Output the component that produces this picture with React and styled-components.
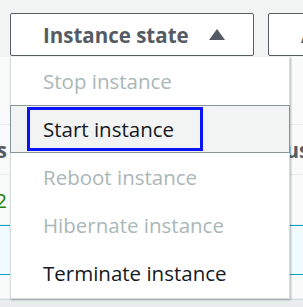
import React from 'react';
import styled, { createGlobalStyle } from 'styled-components';

const GlobalStyle = createGlobalStyle`
  html, body {
    margin: 0;
    padding: 0;
    background: #ffffff;
  }
  body {
    font-family: "Open Sans", "Noto Sans", Arial, sans-serif;
    overflow: hidden;
  }
`;

const Page = styled.div`
  position: relative;
  width: 303px;
  height: 307px;
  overflow: hidden;
  background: #ffffff;
`;

const Toolbar = styled.div`
  display: flex;
  gap: 14px;
  height: 57px;
  padding: 13px 0 0 10px;
  box-sizing: border-box;
  background: #f2f3f3;
`;

const ToolButton = styled.button`
  display: flex;
  align-items: center;
  flex-shrink: 0;
  width: ${(p) => p.width}px;
  height: 43px;
  padding: 0 0 0 32px;
  gap: 20px;
  box-sizing: border-box;
  border: 1px solid #545b64;
  border-radius: 2px;
  background: #ffffff;
  color: #545b64;
  font-family: inherit;
  font-size: 20.5px;
  font-weight: 700;
  cursor: pointer;
`;

const Caret = styled.svg`
  width: 16px;
  height: 11px;
  fill: #545b64;
`;

const Table = styled.div`
  display: flex;
  flex-direction: column;
`;

const Row = styled.div`
  display: flex;
  align-items: center;
  height: ${(p) => p.h}px;
  box-sizing: border-box;
  background: ${(p) => (p.selected ? '#f1faff' : '#fafafa')};
  border-bottom: 1px solid ${(p) => (p.selected ? '#00a1c9' : '#eaeded')};
  border-top: ${(p) => (p.selected ? '1px solid #00a1c9' : 'none')};
`;

const ClipCell = styled.div`
  display: flex;
  justify-content: ${(p) => (p.end ? 'flex-end' : 'flex-start')};
  flex-shrink: 0;
  width: ${(p) => p.w}px;
  margin-left: ${(p) => p.ml || 0}px;
  overflow: hidden;
  white-space: nowrap;
  font-size: 20.5px;
  font-weight: ${(p) => (p.bold ? 700 : 400)};
  color: ${(p) => p.color || '#545b64'};
`;

const Footer = styled.div`
  height: 9px;
  background: #eaeded;
  border-top: 1px solid #d5dbdb;
`;

const Menu = styled.ul`
  position: absolute;
  top: 57px;
  left: 10px;
  width: 280px;
  margin: 0;
  padding: 0 0 1px;
  list-style: none;
  background: #ffffff;
  border: 1px solid #d5dbdb;
  border-top: none;
  box-sizing: border-box;
  box-shadow: 1px 1px 2px rgba(0, 28, 36, 0.3);
`;

const Item = styled.li`
  display: flex;
  align-items: center;
  height: 48px;
  margin: ${(p) => (p.highlight ? '0 -1px' : '0')};
  padding-left: ${(p) => (p.highlight ? '16px' : '32px')};
  box-sizing: border-box;
  font-size: 20.5px;
  color: ${(p) => (p.disabled ? '#aab7b8' : '#16191f')};
  background: ${(p) => (p.highlight ? '#f2f3f3' : 'transparent')};
  border: ${(p) => (p.highlight ? '1px solid #879596' : 'none')};
`;

const Focus = styled.span`
  display: flex;
  align-items: center;
  height: 44px;
  padding: 0 26px 0 13px;
  box-sizing: border-box;
  border: 3px solid #0a14f5;
`;

const items = [
  { label: 'Stop instance', disabled: true },
  { label: 'Start instance', highlight: true },
  { label: 'Reboot instance', disabled: true },
  { label: 'Hibernate instance', disabled: true },
  { label: 'Terminate instance' },
];

export default function App() {
  return (
    <Page>
      <GlobalStyle />
      <Toolbar>
        <ToolButton width={244}>
          Instance state
          <Caret viewBox="0 0 16 11">
            <path d="M8 0 L16 11 L0 11 Z" />
          </Caret>
        </ToolButton>
        <ToolButton width={140}>Actions</ToolButton>
      </Toolbar>
      <Table>
        <Row h={68} />
        <Row h={50}>
          <ClipCell w={7} end bold>Status</ClipCell>
          <ClipCell w={140} ml={237} bold>Status check</ClipCell>
        </Row>
        <Row h={50}>
          <ClipCell w={7} end color="#1d8102">2/2</ClipCell>
        </Row>
        <Row h={50} selected />
        <Row h={24} />
      </Table>
      <Footer />
      <Menu>
        {items.map((it) => (
          <Item key={it.label} disabled={it.disabled} highlight={it.highlight}>
            {it.highlight ? <Focus>{it.label}</Focus> : it.label}
          </Item>
        ))}
      </Menu>
    </Page>
  );
}
